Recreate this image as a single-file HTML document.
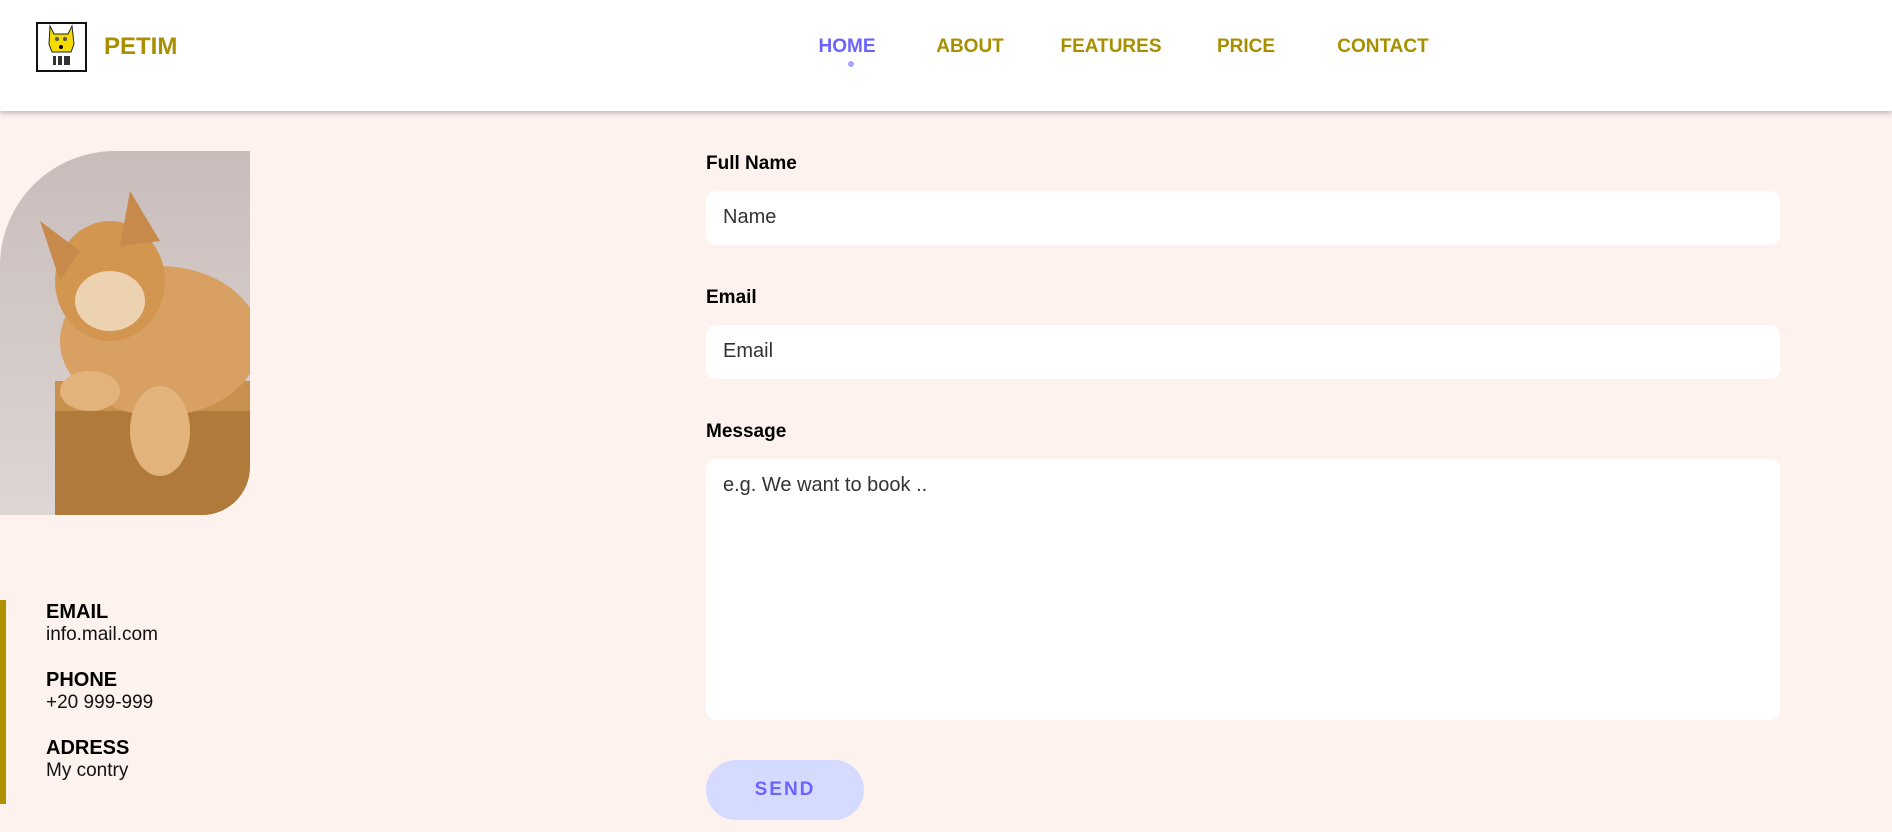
<!DOCTYPE html>
<html><head><meta charset="utf-8"><style>
*{margin:0;padding:0;box-sizing:border-box}
body{width:1892px;height:832px;overflow:hidden;background:#fdf2ee;font-family:"Liberation Sans",sans-serif;position:relative}
header{position:absolute;left:0;top:0;width:1892px;height:111px;background:#fff;box-shadow:0 2px 5px rgba(90,60,80,.35)}
.logo{position:absolute;left:36px;top:22px;width:51px;height:50px;border:2px solid #111;background:#fff}
.brand{position:absolute;left:104px;top:33px;font-size:24px;color:#a88f00;font-weight:bold}
nav a{position:absolute;top:36px;font-size:19px;font-weight:600;color:#a88f00;text-decoration:none;transform:translateX(-50%)}
nav a.on{color:#6c63ff}
.dot{position:absolute;left:848px;top:61px;width:6px;height:6px;border-radius:50%;background:#a8a3ff}
.cat{position:absolute;left:0;top:151px;width:250px;height:364px;border-radius:115px 0 48px 0;overflow:hidden}
.bar{position:absolute;left:0;top:600px;width:6px;height:204px;background:#b09200}
.info{position:absolute;left:46px;font-size:19px;color:#111}
.info b{display:block;font-size:20px;color:#000}
label{position:absolute;left:706px;font-size:19px;font-weight:bold;color:#000}
.in{position:absolute;left:706px;width:1074px;background:#fff;border-radius:10px;font-size:20px;color:#333;padding:15px 17px}
.btn{position:absolute;left:706px;top:760px;width:158px;height:60px;border-radius:30px;background:#d5dbff;color:#6c63ff;font-weight:bold;font-size:19px;letter-spacing:2px;text-align:center;line-height:60px}
</style></head><body>
<header>
<div class="logo"><svg width="47" height="46" viewBox="0 0 47 46"><path d="M12 2 L16 10 L30 10 L34 2 L36 20 L33 28 L14 28 L11 20Z" fill="#f5dc00" stroke="#222"/><circle cx="19" cy="15" r="2" fill="#555"/><circle cx="27" cy="15" r="2" fill="#555"/><circle cx="23" cy="23" r="2" fill="#000"/><rect x="15" y="32" width="17" height="9" fill="#333"/><rect x="18" y="32" width="2" height="9" fill="#fff"/><rect x="24" y="32" width="2" height="9" fill="#fff"/></svg></div>
<div class="brand">PETIM</div>
<nav><a class="on" style="left:847px">HOME</a><a style="left:970px">ABOUT</a><a style="left:1111px">FEATURES</a><a style="left:1246px">PRICE</a><a style="left:1383px">CONTACT</a></nav>
<div class="dot"></div>
</header>
<div class="cat"><svg width="250" height="364" viewBox="0 0 250 364">
<defs><linearGradient id="bg" x1="0" y1="0" x2="0" y2="1"><stop offset="0" stop-color="#c9bdbb"/><stop offset="1" stop-color="#ddd6d4"/></linearGradient></defs>
<rect width="250" height="364" fill="url(#bg)"/>
<rect x="55" y="230" width="195" height="134" fill="#b07a3a"/>
<rect x="55" y="230" width="195" height="30" fill="#c8914d"/>
<ellipse cx="160" cy="190" rx="100" ry="75" fill="#d8a062"/>
<ellipse cx="110" cy="130" rx="55" ry="60" fill="#d39650"/>
<ellipse cx="110" cy="150" rx="35" ry="30" fill="#ecd2b0"/>
<path d="M40 70 L80 100 L60 130Z" fill="#c88a4a"/><path d="M130 40 L160 90 L120 95Z" fill="#c88a4a"/>
<ellipse cx="160" cy="280" rx="30" ry="45" fill="#e2b47c"/><ellipse cx="90" cy="240" rx="30" ry="20" fill="#e2b47c"/>
</svg></div>
<div class="bar"></div>
<div class="info" style="top:601px"><b>EMAIL</b>info.mail.com</div>
<div class="info" style="top:669px"><b>PHONE</b>+20 999-999</div>
<div class="info" style="top:737px"><b>ADRESS</b>My contry</div>
<label style="top:153px">Full Name</label>
<div class="in" style="top:191px;height:54px">Name</div>
<label style="top:287px">Email</label>
<div class="in" style="top:325px;height:54px">Email</div>
<label style="top:421px">Message</label>
<div class="in" style="top:459px;height:261px">e.g. We want to book ..</div>
<div class="btn">SEND</div>
</body></html>
